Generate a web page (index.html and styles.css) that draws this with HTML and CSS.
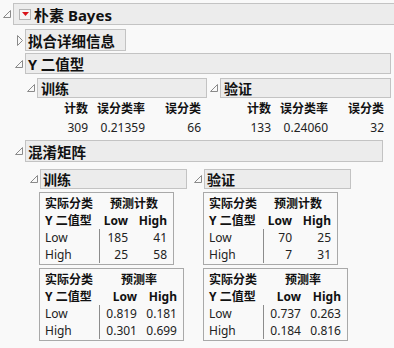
FILE: index.html
```html
<!DOCTYPE html>
<html lang="zh">

<head>
    <meta charset="utf-8">
    <meta name="viewport" content="width=device-width, initial-scale=1.0">
    <title>朴素 Bayes</title>
    <link rel="stylesheet" href="styles.css">
</head>

<body>
    <div class="report">
        <!-- toppen:朴素 Bayes -->
        <div class="head head-top">
            <svg class="tri" viewBox="0 0 8 8"><polygon points="0.5,7.5 7.5,0.5 7.5,7.5" /></svg>
            <div class="bar bar-top">
                <span class="menu"><svg width="7" height="4" viewBox="0 0 7 4"><polygon points="0,0 7,0 3.5,4" /></svg></span>
                朴素 Bayes
            </div>
        </div>

        <div class="head head-fit">
            <svg class="tri-closed" viewBox="0 0 6 11"><polygon points="0.5,0.5 5.5,5.5 0.5,10.5" /></svg>
            <div class="bar bar-fit">拟合详细信息</div>
        </div>

        <!-- Y 二值型 -->
        <div class="head head-y">
            <svg class="tri" viewBox="0 0 8 8"><polygon points="0.5,7.5 7.5,0.5 7.5,7.5" /></svg>
            <div class="bar bar-y">Y 二值型</div>
        </div>

        <div class="pair pair-y">
            <div class="node node-train">
                <div class="head">
                    <svg class="tri" viewBox="0 0 8 8"><polygon points="0.5,7.5 7.5,0.5 7.5,7.5" /></svg>
                    <div class="bar bar-stat">训练</div>
                </div>
                <table class="stats">
                    <colgroup><col class="c1"><col class="c2"><col class="c3"></colgroup>
                    <tr><th>计数</th><th>误分类率</th><th>误分类</th></tr>
                    <tr><td>309</td><td>0.21359</td><td>66</td></tr>
                </table>
            </div>
            <div class="node">
                <div class="head">
                    <svg class="tri" viewBox="0 0 8 8"><polygon points="0.5,7.5 7.5,0.5 7.5,7.5" /></svg>
                    <div class="bar bar-stat bar-stat2">验证</div>
                </div>
                <table class="stats">
                    <colgroup><col class="c1"><col class="c2"><col class="c3"></colgroup>
                    <tr><th>计数</th><th>误分类率</th><th>误分类</th></tr>
                    <tr><td>133</td><td>0.24060</td><td>32</td></tr>
                </table>
            </div>
        </div>

        <!-- 混淆矩阵 -->
        <div class="head head-mat">
            <svg class="tri" viewBox="0 0 8 8"><polygon points="0.5,7.5 7.5,0.5 7.5,7.5" /></svg>
            <div class="bar bar-mat">混淆矩阵</div>
        </div>

        <div class="pair pair-mat">
            <div class="node">
                <div class="head">
                    <svg class="tri" viewBox="0 0 8 8"><polygon points="0.5,7.5 7.5,0.5 7.5,7.5" /></svg>
                    <div class="bar bar-sub">训练</div>
                </div>
                <div class="box">
                    <table class="matrix">
                        <colgroup><col class="lab"><col class="cnt1"><col class="cnt2"></colgroup>
                        <tr class="hd"><th class="left">实际分类</th><th colspan="2" class="mid">预测计数</th></tr>
                        <tr class="hd"><th class="left">Y 二值型</th><th>Low</th><th>High</th></tr>
                        <tr><td class="left">Low</td><td class="sep">185</td><td>41</td></tr>
                        <tr><td class="left">High</td><td class="sep">25</td><td>58</td></tr>
                    </table>
                </div>
                <div class="box box-rate">
                    <table class="matrix">
                        <colgroup><col class="lab"><col class="rate"><col class="rate"></colgroup>
                        <tr class="hd"><th class="left">实际分类</th><th colspan="2" class="mid">预测率</th></tr>
                        <tr class="hd"><th class="left">Y 二值型</th><th>Low</th><th>High</th></tr>
                        <tr><td class="left">Low</td><td class="sep">0.819</td><td>0.181</td></tr>
                        <tr><td class="left">High</td><td class="sep">0.301</td><td>0.699</td></tr>
                    </table>
                </div>
            </div>
            <div class="node">
                <div class="head">
                    <svg class="tri" viewBox="0 0 8 8"><polygon points="0.5,7.5 7.5,0.5 7.5,7.5" /></svg>
                    <div class="bar bar-sub">验证</div>
                </div>
                <div class="box">
                    <table class="matrix">
                        <colgroup><col class="lab"><col class="cnt1"><col class="cnt2"></colgroup>
                        <tr class="hd"><th class="left">实际分类</th><th colspan="2" class="mid">预测计数</th></tr>
                        <tr class="hd"><th class="left">Y 二值型</th><th>Low</th><th>High</th></tr>
                        <tr><td class="left">Low</td><td class="sep">70</td><td>25</td></tr>
                        <tr><td class="left">High</td><td class="sep">7</td><td>31</td></tr>
                    </table>
                </div>
                <div class="box box-rate">
                    <table class="matrix">
                        <colgroup><col class="lab"><col class="rate"><col class="rate"></colgroup>
                        <tr class="hd"><th class="left">实际分类</th><th colspan="2" class="mid">预测率</th></tr>
                        <tr class="hd"><th class="left">Y 二值型</th><th>Low</th><th>High</th></tr>
                        <tr><td class="left">Low</td><td class="sep">0.737</td><td>0.263</td></tr>
                        <tr><td class="left">High</td><td class="sep">0.184</td><td>0.816</td></tr>
                    </table>
                </div>
            </div>
        </div>
    </div>
</body>

</html>
```

FILE: styles.css
```css
body {
    margin: 0;
    background: #f9f9f9;
    font-family: "Noto Sans", "Noto Sans CJK SC", sans-serif;
    color: #111;
}

.report {
    padding-top: 3px;
    height: 345px;
    overflow: hidden;
}

/* outline header: triangle + grey bar */
.head {
    display: flex;
    align-items: center;
    gap: 2px;
}

.tri {
    flex: none;
    width: 8px;
    height: 8px;
}

.tri-closed {
    flex: none;
    width: 6px;
    height: 11px;
}

.tri polygon,
.tri-closed polygon {
    fill: none;
    stroke: #8a8a8a;
    stroke-width: 1;
}

.bar {
    box-sizing: border-box;
    display: flex;
    align-items: center;
    flex: none;
    background: #ececec;
    border: 1px solid #c3c3c3;
    font-weight: 700;
    font-size: 14px;
    padding-left: 2px;
    white-space: nowrap;
}

.head-top {
    padding-left: 3px;
}

.bar-top {
    width: 390px;
    height: 22px;
    font-size: 15px;
    padding-left: 5px;
}

.menu {
    display: flex;
    align-items: center;
    justify-content: center;
    box-sizing: border-box;
    width: 12px;
    height: 11px;
    margin-right: 3px;
    border: 1px solid #b4b4b4;
    background: #f6f6f6;
}

.menu polygon {
    fill: #d9141b;
}

.head-fit {
    margin-top: 4px;
    padding-left: 17px;
}

.bar-fit {
    width: 101px;
    height: 22px;
    font-size: 14.5px;
}

.head-y {
    margin-top: 2px;
    padding-left: 15px;
}

.bar-y {
    width: 366px;
    height: 21px;
    font-size: 14.5px;
}

.pair {
    display: flex;
    align-items: flex-start;
}

.pair-y {
    margin-top: 4px;
    padding-left: 27px;
    gap: 3px;
}

.bar-stat {
    width: 170px;
    height: 20px;
    padding-left: 3px;
}

.bar-stat2 {
    width: 171px;
}

.stats {
    border-collapse: collapse;
    table-layout: fixed;
    margin-left: 33px;
    margin-top: 1px;
    font-size: 12px;
}

.stats .c1 {
    width: 28px;
}

.stats .c2 {
    width: 57px;
}

.stats .c3 {
    width: 56px;
}

.stats th,
.stats td {
    padding: 0;
    height: 19px;
    line-height: 19px;
    text-align: right;
    white-space: nowrap;
}

.stats td {
    font-weight: 400;
    color: #222;
}

.head-mat {
    margin-top: 3px;
    padding-left: 15px;
}

.bar-mat {
    width: 358px;
    height: 22px;
    font-size: 14.5px;
}

.pair-mat {
    margin-top: 7px;
    padding-left: 30px;
    gap: 7px;
}

.bar-sub {
    width: 147px;
    height: 20px;
    padding-left: 2px;
}

/* confusion matrix boxes */
.box {
    width: fit-content;
    margin-left: 9px;
    margin-top: 3px;
    padding: 2px 4px 1px 5px;
    border: 1px solid #a9a9a9;
}

.matrix {
    border-collapse: collapse;
    table-layout: fixed;
    font-size: 12px;
}

.matrix .lab {
    width: 54px;
}

.matrix .cnt1 {
    width: 31px;
}

.matrix .cnt2 {
    width: 39px;
}

.matrix .rate {
    width: 40px;
}

.matrix th,
.matrix td {
    padding: 0 2px 0 0;
    height: 17px;
    line-height: 17px;
    text-align: right;
    white-space: nowrap;
}

.matrix td {
    color: #222;
}

.matrix .left {
    text-align: left;
    padding: 0;
}

.matrix .mid {
    text-align: center;
    padding: 0;
}

.matrix .sep {
    border-left: 1px solid #8c8c8c;
}
```
